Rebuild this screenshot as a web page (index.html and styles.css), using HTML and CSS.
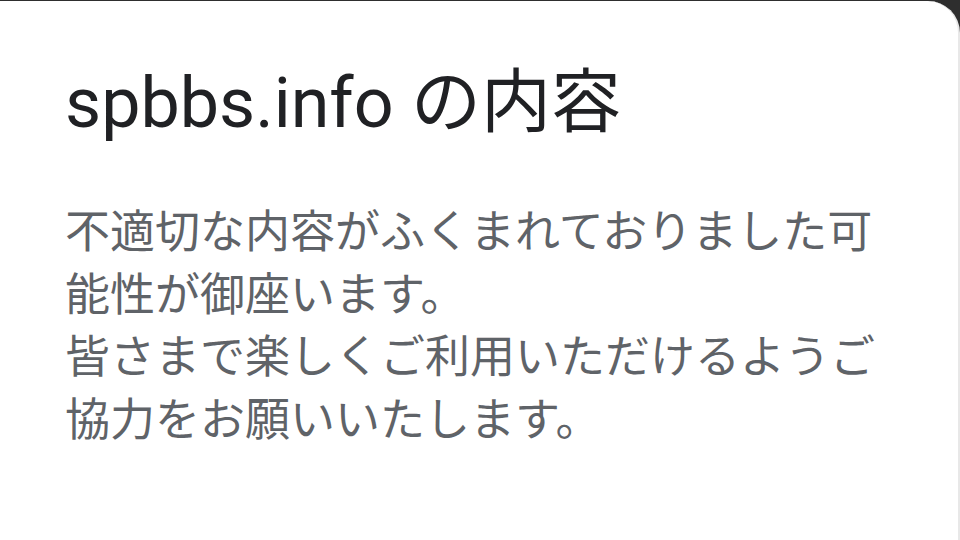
FILE: index.html
```html
<!DOCTYPE html>
<html lang="ja">
<head>
<meta charset="UTF-8">
<meta name="viewport" content="width=device-width, initial-scale=1.0">
<title>spbbs.info の内容</title>
<link rel="stylesheet" href="styles.css">
</head>
<body>
<div class="dialog">
<h1 class="dialog-title">spbbs.info の内容</h1>
<p class="dialog-message">不適切な内容がふくまれておりました可能性が御座います。<br>皆さまで楽しくご利用いただけるようご協力をお願いいたします。</p>
</div>
</body>
</html>
```

FILE: styles.css
```css
html, body {
    height: 100%;
}
body {
    margin: 0;
    background-color: #2e2e2e;
    overflow: hidden;
}
.dialog {
    box-sizing: border-box;
    margin: 1px 0 0 -30px;
    width: 990px;
    height: 539px;
    padding: 63px 0 0 95px;
    background-color: #fff;
    border-radius: 32px 32px 0 0;
    border-right: 2px solid #e8e8e8;
}
.dialog-title {
    margin: 0;
    font-family: Roboto, "Noto Sans CJK JP", sans-serif;
    font-size: 70px;
    font-weight: 400;
    line-height: 78px;
    color: #202124;
}
.dialog-message {
    margin: 56px 0 0;
    max-width: 830px;
    font-family: "Noto Sans CJK JP", sans-serif;
    font-size: 45px;
    line-height: 62.5px;
    color: #5f6368;
}
```
